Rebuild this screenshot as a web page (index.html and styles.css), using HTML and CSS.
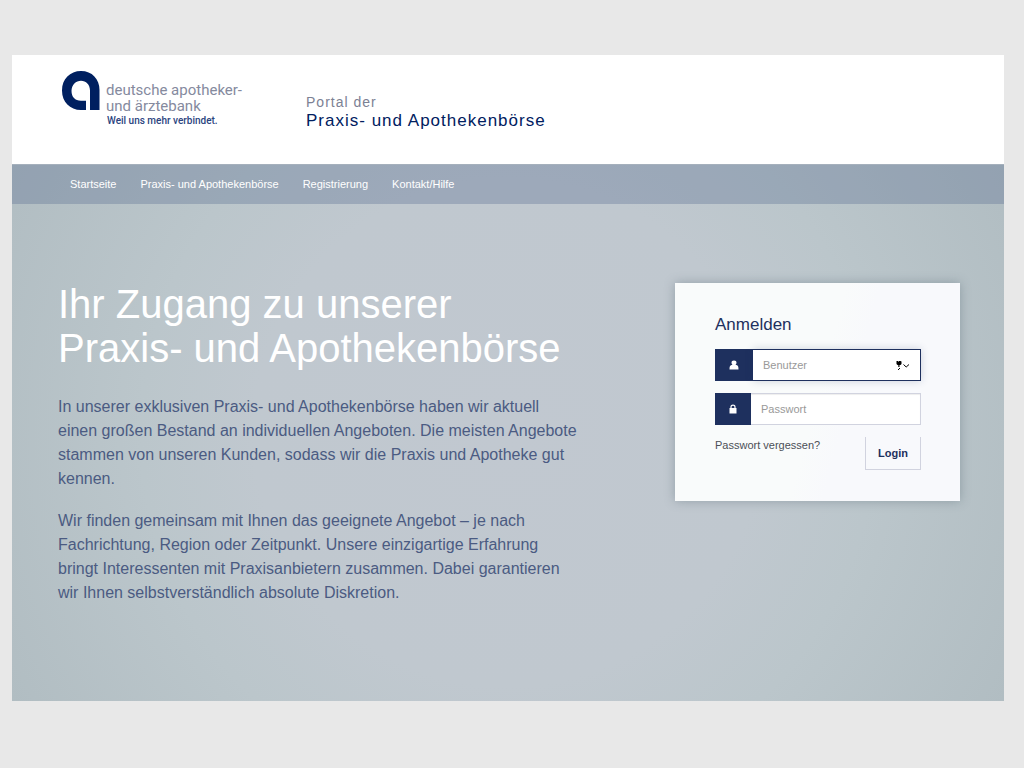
FILE: index.html
```html
<!DOCTYPE html>
<html lang="de">
<head>
<meta charset="utf-8">
<meta name="viewport" content="width=device-width, initial-scale=1">
<title>Portal der Praxis- und Apothekenbörse</title>
<link rel="stylesheet" href="styles.css">
</head>
<body>
<div class="page">
  <header class="header">
    <a class="logo" href="#">
      <svg class="logo-mark" viewBox="0 0 38 40" aria-hidden="true">
        <path fill="#002060" fill-rule="evenodd" d="M0 19.500C0 8 8 0 19 0S37.500 8 37.500 19V39H28V19.500C28 13.500 24 9.700 19 9.700S9.500 13.800 9.500 19.800C9.500 26 13 29.800 19 29.800H24V39H19C8 39 0 31 0 19.500Z"/>
      </svg>
      <span class="logo-text">
        <span class="logo-name">deutsche apotheker-<br>und ärztebank</span>
        <span class="logo-claim">Weil uns mehr verbindet.</span>
      </span>
    </a>
    <div class="portal">
      <span class="portal-kicker">Portal der</span>
      <span class="portal-title">Praxis- und Apothekenbörse</span>
    </div>
  </header>
  <div class="stage">
    <nav class="nav" aria-label="Hauptnavigation">
      <a href="#">Startseite</a>
      <a href="#">Praxis- und Apothekenbörse</a>
      <a href="#">Registrierung</a>
      <a href="#">Kontakt/Hilfe</a>
    </nav>
    <main class="hero">
      <section class="intro">
        <h1>Ihr Zugang zu unserer Praxis- und Apothekenbörse</h1>
        <p>In unserer exklusiven Praxis- und Apothekenbörse haben wir aktuell einen großen Bestand an individuellen Angeboten. Die meisten Angebote stammen von unseren Kunden, sodass wir die Praxis und Apotheke gut kennen.</p>
        <p>Wir finden gemeinsam mit Ihnen das geeignete Angebot – je nach Fachrichtung, Region oder Zeitpunkt. Unsere einzigartige Erfahrung bringt Interessenten mit Praxisanbietern zusammen. Dabei garantieren wir Ihnen selbstverständlich absolute Diskretion.</p>
      </section>
      <form class="login">
        <h2>Anmelden</h2>
        <div class="field field-active">
          <label for="user" aria-label="Benutzer">
            <svg viewBox="0 0 10 10" width="10" height="10" aria-hidden="true"><path fill="#fff" d="M5 .5C6.700 .5 7.500 1.300 7.500 2.600C7.500 3.700 7 4.500 6.500 5H7.500C9 5.300 9.500 6.500 9.500 9.500H.5C.5 6.500 1 5.300 2.500 5H3.500C3 4.500 2.500 3.700 2.500 2.600C2.500 1.300 3.300 .5 5 .5Z"/></svg>
          </label>
          <input id="user" type="text" placeholder="Benutzer">
          <svg class="key" viewBox="0 0 14 10" width="14" height="10" aria-hidden="true"><path fill="#000" d="M.5 0H2L2.500 1L3 0H4.500L5.500 .5V3L4.500 4H3.500V6H2.300V4H1.500L.5 3Z"/><path fill="#000" d="M3 7H4V8H3V9H2V8H3Z"/><path fill="none" stroke="#000" d="M7.500 3.500L10.200 6L13 3.500"/></svg>
        </div>
        <div class="field">
          <label for="pass" aria-label="Passwort">
            <svg viewBox="0 0 10 10" width="10" height="10" aria-hidden="true"><path fill="none" stroke="#fff" stroke-width="1.200" d="M3 5V3C3 .4 7 .4 7 3V5"/><path fill="#fff" d="M1.500 4H8.500V9.500H1.500Z"/></svg>
          </label>
          <input id="pass" type="password" placeholder="Passwort">
        </div>
        <div class="actions">
          <a href="#">Passwort vergessen?</a>
          <button type="button">Login</button>
        </div>
      </form>
    </main>
  </div>
</div>
</body>
</html>
```
FILE: styles.css
```css
* { box-sizing: border-box; }
body {
  margin: 0;
  padding: 55px 20px 67px 12px;
  background: #e8e8e8;
  color: #1e305e;
  font-family: "Liberation Sans", Arial, sans-serif;
}
a { color: inherit; text-decoration: none; }
.page { background: #fff; }

.header {
  display: flex;
  align-items: flex-start;
  gap: 64px;
  padding: 16px 50px 34px;
}
.logo { display: flex; gap: 6px; }
.logo-mark { width: 38px; height: 40px; }
.logo-text {
  display: flex;
  flex-direction: column;
  padding-top: 11px;
  font-family: Roboto, sans-serif;
  white-space: nowrap;
}
.logo-name { color: #858a9e; font-size: 15px; line-height: 16px; }
.logo-claim { color: #2b4480; font-size: 10px; font-weight: 500; line-height: 14px; padding-left: 1px; }
.portal { display: flex; flex-direction: column; padding-top: 21px; letter-spacing: 1px; }
.portal-kicker { color: #7c8194; font-size: 14px; line-height: 20px; }
.portal-title { color: #002060; font-size: 17px; line-height: 18px; }

.stage { background: radial-gradient(circle farthest-corner, #c1c8d0 0%, #c0c8cf 45%, #bbc6cb 65%, #b1bdc2 100%); }
.nav {
  display: flex;
  flex-wrap: wrap;
  gap: 0 24px;
  padding: 0 58px;
  border-top: 1px solid #a5b0bc;
  background: rgba(92, 113, 147, .35);
  color: #fff;
  font-size: 11px;
  line-height: 39px;
}
.hero {
  display: flex;
  align-items: flex-start;
  justify-content: space-between;
  gap: 40px;
  padding: 78px 44px 96px 46px;
}
.intro { max-width: 520px; }
h1, h2, p { margin: 0; font-weight: 400; }
h1 { margin-bottom: 25px; color: #fff; font-size: 40px; line-height: 44px; }
p { color: #4b5b82; font-size: 16px; line-height: 24px; }
p + p { margin-top: 18px; }

.login {
  flex: 0 0 285px;
  margin-top: 1px;
  padding: 31px 39px 31px 40px;
  background: linear-gradient(105deg, #f9fbfb 50%, #f8f9fc 60%);
  box-shadow: 0 0 10px rgba(80, 100, 110, .4);
  font-size: 11px;
}
h2 { margin-bottom: 13px; font-size: 17px; line-height: 22px; }
.field { position: relative; display: flex; height: 32px; margin-bottom: 12px; }
.field label {
  display: flex;
  flex: 0 0 36px;
  align-items: center;
  justify-content: center;
  background: #1e305e;
}
.field-active label { flex-basis: 38px; }
.field input {
  flex: 1;
  min-width: 0;
  padding: 0 10px;
  border: 1px solid #d1d3df;
  border-left: 0;
  border-radius: 0;
  background: #fff;
  box-shadow: inset 0 1px 1px rgba(0, 0, 0, .07);
  color: #1e305e;
  font: inherit;
}
.field-active input { border-color: #1e305e; box-shadow: 0 0 8px rgba(30, 48, 94, .2); }
.field input::placeholder { color: #999; opacity: 1; }
.key { position: absolute; right: 11px; top: 12px; }
.actions { display: flex; align-items: flex-start; justify-content: space-between; }
.actions a { color: #4b4f57; line-height: 16px; }
.actions button {
  width: 56px;
  height: 33px;
  padding: 0;
  border: 1px solid #d1d3df;
  border-top: 0;
  background: transparent;
  color: #1e305e;
  font: inherit;
  font-weight: 700;
}
```
